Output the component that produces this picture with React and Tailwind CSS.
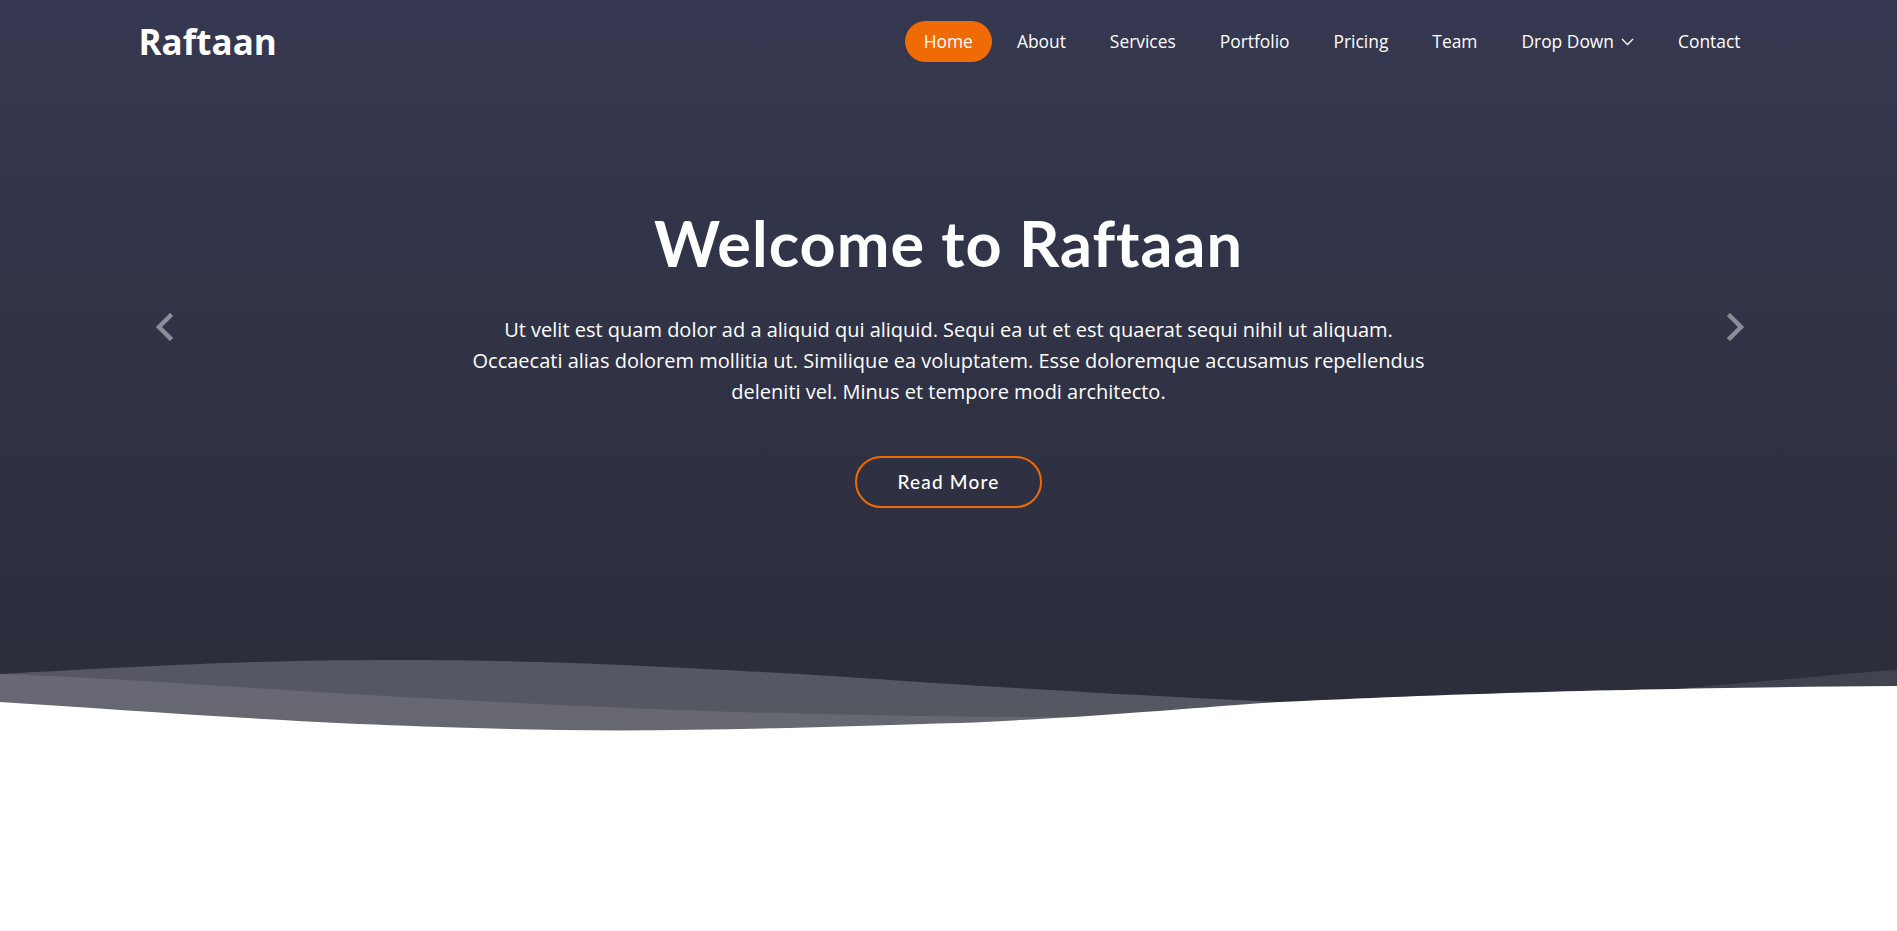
import React from 'react';

const navItems = ['Home', 'About', 'Services', 'Portfolio', 'Pricing', 'Team', 'Drop Down', 'Contact'];

const Chevron = ({ dir }) => (
  <svg width="20" height="28" viewBox="0 0 20 28" fill="none">
    <polyline
      points={dir === 'left' ? '16,3 5,14 16,25' : '4,3 15,14 4,25'}
      stroke="#8c8d99"
      strokeWidth="4.5"
      strokeLinecap="square"
    />
  </svg>
);

const Waves = () => (
  <svg className="block w-full h-[90px]" viewBox="0 0 1897 90" preserveAspectRatio="none">
    <path
      d="M0,32 C120,36 300,50 480,59 C650,68 850,75 1050,75 C1300,75 1500,62 1700,45 C1780,38 1850,31 1897,28 L1897,90 L0,90 Z"
      fill="rgba(255,255,255,0.1)"
    />
    <path
      d="M0,32 C150,24 250,18 400,18 C550,18 650,24 800,32 C950,42 1100,52 1280,60 C1500,70 1700,78 1897,80 L1897,90 L0,90 Z"
      fill="rgba(255,255,255,0.2)"
    />
    <path
      d="M0,60 C160,70 320,84 560,88 C700,90 850,84 960,81 C1100,75 1200,65 1280,60 C1400,54 1600,46 1897,44 L1897,90 L0,90 Z"
      fill="#ffffff"
    />
  </svg>
);

const App = () => {
  return (
    <div className="min-h-screen bg-white">
      <section className="relative bg-gradient-to-b from-[#353850] to-[#2b2d3a]">
        <header className="max-w-[1620px] mx-auto h-[83px] flex items-center justify-between">
          <a href="#" className="font-['Open_Sans',sans-serif] font-bold text-[35px] text-white leading-none">
            Raftaan
          </a>
          <nav className="mr-[-4px]">
            <ul className="flex items-center font-['Open_Sans',sans-serif] text-[17.4px] text-white">
              {navItems.map((item) => (
                <li key={item}>
                  <a
                    href="#"
                    className={`flex items-center py-[10px] leading-[21px] rounded-full ${
                      item === 'Home' ? 'bg-[#f06a06] px-[19px] mr-[3px]' : 'px-[22px]'
                    }`}
                  >
                    {item}
                    {item === 'Drop Down' && (
                      <svg className="ml-[7px]" width="13" height="8" viewBox="0 0 13 8" fill="none">
                        <polyline points="1,1 6.5,6.5 12,1" stroke="#fff" strokeWidth="1.3" />
                      </svg>
                    )}
                  </a>
                </li>
              ))}
            </ul>
          </nav>
        </header>

        <div className="flex flex-col items-center text-center text-white pt-[128px]">
          <h2 className="font-['Lato',sans-serif] font-bold text-[63px] leading-[63px] tracking-[1px]">
            Welcome to Raftaan
          </h2>
          <p className="mt-[40px] max-w-[970px] font-['Open_Sans',sans-serif] text-[20px] leading-[31px]">
            Ut velit est quam dolor ad a aliquid qui aliquid. Sequi ea ut et est quaerat sequi nihil ut aliquam.
            Occaecati alias dolorem mollitia ut. Similique ea voluptatem. Esse doloremque accusamus repellendus
            deleniti vel. Minus et tempore modi architecto.
          </p>
          <a
            href="#"
            className="mt-[49px] h-[52px] px-[40px] flex items-center justify-center rounded-full border-2 border-[#f06a06] font-['Lato',sans-serif] font-medium text-[19px] tracking-[1.2px] text-white"
          >
            Read More
          </a>
        </div>

        <button className="absolute top-[313px] left-[154px]">
          <Chevron dir="left" />
        </button>
        <button className="absolute top-[313px] left-[1726px]">
          <Chevron dir="right" />
        </button>

        <div className="mt-[134px]">
          <Waves />
        </div>
      </section>
    </div>
  );
};

export default App;
